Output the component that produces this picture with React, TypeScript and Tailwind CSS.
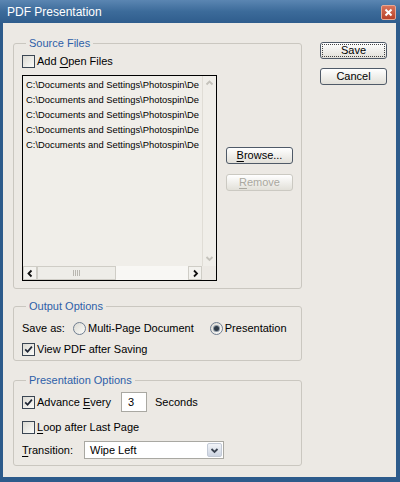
import React from 'react';

const Check = ({ checked = false }: { checked?: boolean }) => (
  <span className="w-[13px] h-[13px] shrink-0 border border-[#3b4653] bg-linear-to-br from-[#dcdad3] to-[#fbfbf9] flex items-center justify-center">
    {checked && (
      <svg width="9" height="9" viewBox="0 0 9 9">
        <path d="M1.2 4.3 L3.6 6.8 L7.9 1.6" fill="none" stroke="#1d2433" strokeWidth="1.7" />
      </svg>
    )}
  </span>
);

const Radio = ({ checked = false }: { checked?: boolean }) => (
  <span className="w-[13px] h-[13px] shrink-0 rounded-full border border-[#6f7d90] bg-linear-to-br from-[#dcdad3] to-[#fbfbf9] flex items-center justify-center">
    {checked && <span className="w-[5px] h-[5px] rounded-full bg-[#2e3a46] ring-1 ring-[#8d99a6]" />}
  </span>
);

const XpButton = ({
  children,
  focused = false,
  disabled = false,
}: {
  children: React.ReactNode;
  focused?: boolean;
  disabled?: boolean;
}) => (
  <div
    className={`w-[67px] h-[17px] rounded-[3px] border p-[1px] bg-linear-to-b from-white to-[#e2e0d9] text-[11px] leading-none ${
      disabled ? 'border-[#cbc9c2] text-[#aaa8a0]' : 'border-[#4f5a68] text-black'
    }`}
  >
    <div
      className={`w-full h-full flex items-center justify-center border ${
        focused ? 'border-dotted border-[#444]' : 'border-transparent'
      }`}
    >
      {children}
    </div>
  </div>
);

const U = ({ children }: { children: React.ReactNode }) => (
  <span className="underline underline-offset-[2px]">{children}</span>
);

const Chevron = ({ dir, color = '#111' }: { dir: 'up' | 'down' | 'left' | 'right'; color?: string }) => {
  const paths = {
    up: 'M1.5 5.5 L4.5 2.5 L7.5 5.5',
    down: 'M1.5 3 L4.5 6 L7.5 3',
    left: 'M5.5 1.5 L2.5 4.5 L5.5 7.5',
    right: 'M3 1.5 L6 4.5 L3 7.5',
  };
  return (
    <svg width="9" height="9" viewBox="0 0 9 9">
      <path d={paths[dir]} fill="none" stroke={color} strokeWidth="1.8" />
    </svg>
  );
};

const Group = ({
  title,
  className = '',
  children,
}: {
  title: string;
  className?: string;
  children: React.ReactNode;
}) => (
  <fieldset className={`border border-[#cac7c0] rounded-[3px] px-[8px] ${className}`}>
    <legend className="ml-[4px] px-[3px] text-[11px] leading-[14px] text-[#2e5fa8]">{title}</legend>
    {children}
  </fieldset>
);

// what the list shows of each path before the scrollbar
const files = Array.from({ length: 5 }, () => 'C:\\Documents and Settings\\Photospin\\De');

export default function App() {
  return (
    <div className="w-[400px] h-[482px] bg-[#2d5b8b] flex flex-col font-['Liberation_Sans',Arial,sans-serif] text-[11px] text-black select-none">
      {/* Title bar */}
      <div className="h-[23px] shrink-0 flex items-center justify-between pl-[7px] pr-[4px] bg-linear-to-b from-[#5b86b2] via-[#3c6b9a] to-[#2f5d8d]">
        <span className="text-white text-[12px] leading-none">PDF Presentation</span>
        <span className="w-[15px] h-[15px] mt-[2px] rounded-[2px] border border-[#e7a894] bg-linear-to-b from-[#d8735a] to-[#b84229] flex items-center justify-center">
          <svg width="9" height="9" viewBox="0 0 9 9">
            <path d="M1.5 1.5 L7.5 7.5 M7.5 1.5 L1.5 7.5" stroke="white" strokeWidth="2" />
          </svg>
        </span>
      </div>

      {/* Client area */}
      <div className="flex-1 ml-[3px] mr-[4px] mb-[5px] bg-[#ece9e4] flex items-start pt-[13px] pl-[10px]">
        <div className="w-[289px] flex flex-col">
          <Group title="Source Files" className="pt-[4px] pb-[7px]">
            <label className="h-[14px] flex items-center gap-[2px]">
              <Check />
              <span>
                Add <U>O</U>pen Files
              </span>
            </label>
            <div className="mt-[7px] flex items-start">
              {/* File list */}
              <div className="w-[195px] h-[206px] border border-black bg-[#f0eee9] flex flex-col">
                <div className="flex-1 flex min-h-0">
                  <div className="flex-1 overflow-hidden pt-[1px] pl-[3px] text-[9.4px] leading-[15px] whitespace-nowrap">
                    {files.map((f, i) => (
                      <div key={i}>{f}</div>
                    ))}
                  </div>
                  <div className="w-[14px] border-l border-[#e0ddd6] flex flex-col items-center justify-between py-[3px]">
                    <Chevron dir="up" color="#c4c2bb" />
                    <Chevron dir="down" color="#c4c2bb" />
                  </div>
                </div>
                <div className="h-[14px] flex">
                  <div className="w-[14px] border border-[#cfcdc6] bg-[#f3f2ee] flex items-center justify-center">
                    <Chevron dir="left" />
                  </div>
                  <div className="w-[79px] border border-[#cfcdc6] bg-[#eeede8] flex items-center justify-center">
                    <svg width="7" height="6" viewBox="0 0 7 6">
                      <path d="M0.5 0 V6 M2.5 0 V6 M4.5 0 V6 M6.5 0 V6" stroke="#b9b7b0" strokeWidth="1" />
                    </svg>
                  </div>
                  <div className="flex-1 bg-[#f8f7f4]" />
                  <div className="w-[14px] border border-[#cfcdc6] bg-[#f3f2ee] flex items-center justify-center">
                    <Chevron dir="right" />
                  </div>
                  <div className="w-[14px] bg-[#ece9e4]" />
                </div>
              </div>

              <div className="ml-[9px] mt-[72px] flex flex-col gap-[10px]">
                <XpButton>
                  <span>
                    <U>B</U>rowse...
                  </span>
                </XpButton>
                <XpButton disabled>
                  <span>
                    <U>R</U>emove
                  </span>
                </XpButton>
              </div>
            </div>
          </Group>

          <Group title="Output Options" className="mt-[10px] pt-[8px] pb-[4px]">
            <div className="h-[14px] flex items-center">
              <span className="w-[51px]">Save as:</span>
              <label className="flex items-center gap-[2px]">
                <Radio />
                <span>Multi-Page Document</span>
              </label>
              <label className="ml-[16px] flex items-center gap-[2px]">
                <Radio checked />
                <span>Presentation</span>
              </label>
            </div>
            <label className="mt-[7px] h-[14px] flex items-center gap-[2px]">
              <Check checked />
              <span>View PDF after Saving</span>
            </label>
          </Group>

          <Group title="Presentation Options" className="mt-[12px] pt-[5px] pb-[6px]">
            <div className="h-[20px] flex items-center">
              <label className="flex items-center gap-[2px]">
                <Check checked />
                <span>
                  Advance <U>E</U>very
                </span>
              </label>
              <div className="ml-[10px] w-[26px] h-[20px] border border-[#a9a8a2] bg-white flex items-center pl-[6px]">3</div>
              <span className="ml-[8px]">Seconds</span>
            </div>
            <label className="mt-[8px] h-[14px] flex items-center gap-[2px]">
              <Check />
              <span>
                <U>L</U>oop after Last Page
              </span>
            </label>
            <div className="mt-[7px] h-[18px] flex items-center">
              <span className="w-[62px]">
                <U>T</U>ransition:
              </span>
              <div className="w-[140px] h-[18px] border border-[#a9a8a2] bg-white flex">
                <span className="flex-1 pl-[5px] flex items-center">Wipe Left</span>
                <span className="w-[15px] m-[1px] rounded-[2px] border border-[#c3cad6] bg-linear-to-b from-[#f2f4f8] to-[#cdd5e2] flex items-center justify-center">
                  <Chevron dir="down" color="#3a4250" />
                </span>
              </div>
            </div>
          </Group>
        </div>

        <div className="ml-[18px] pt-[6px] flex flex-col gap-[9px]">
          <XpButton focused>Save</XpButton>
          <XpButton>Cancel</XpButton>
        </div>
      </div>
    </div>
  );
}
